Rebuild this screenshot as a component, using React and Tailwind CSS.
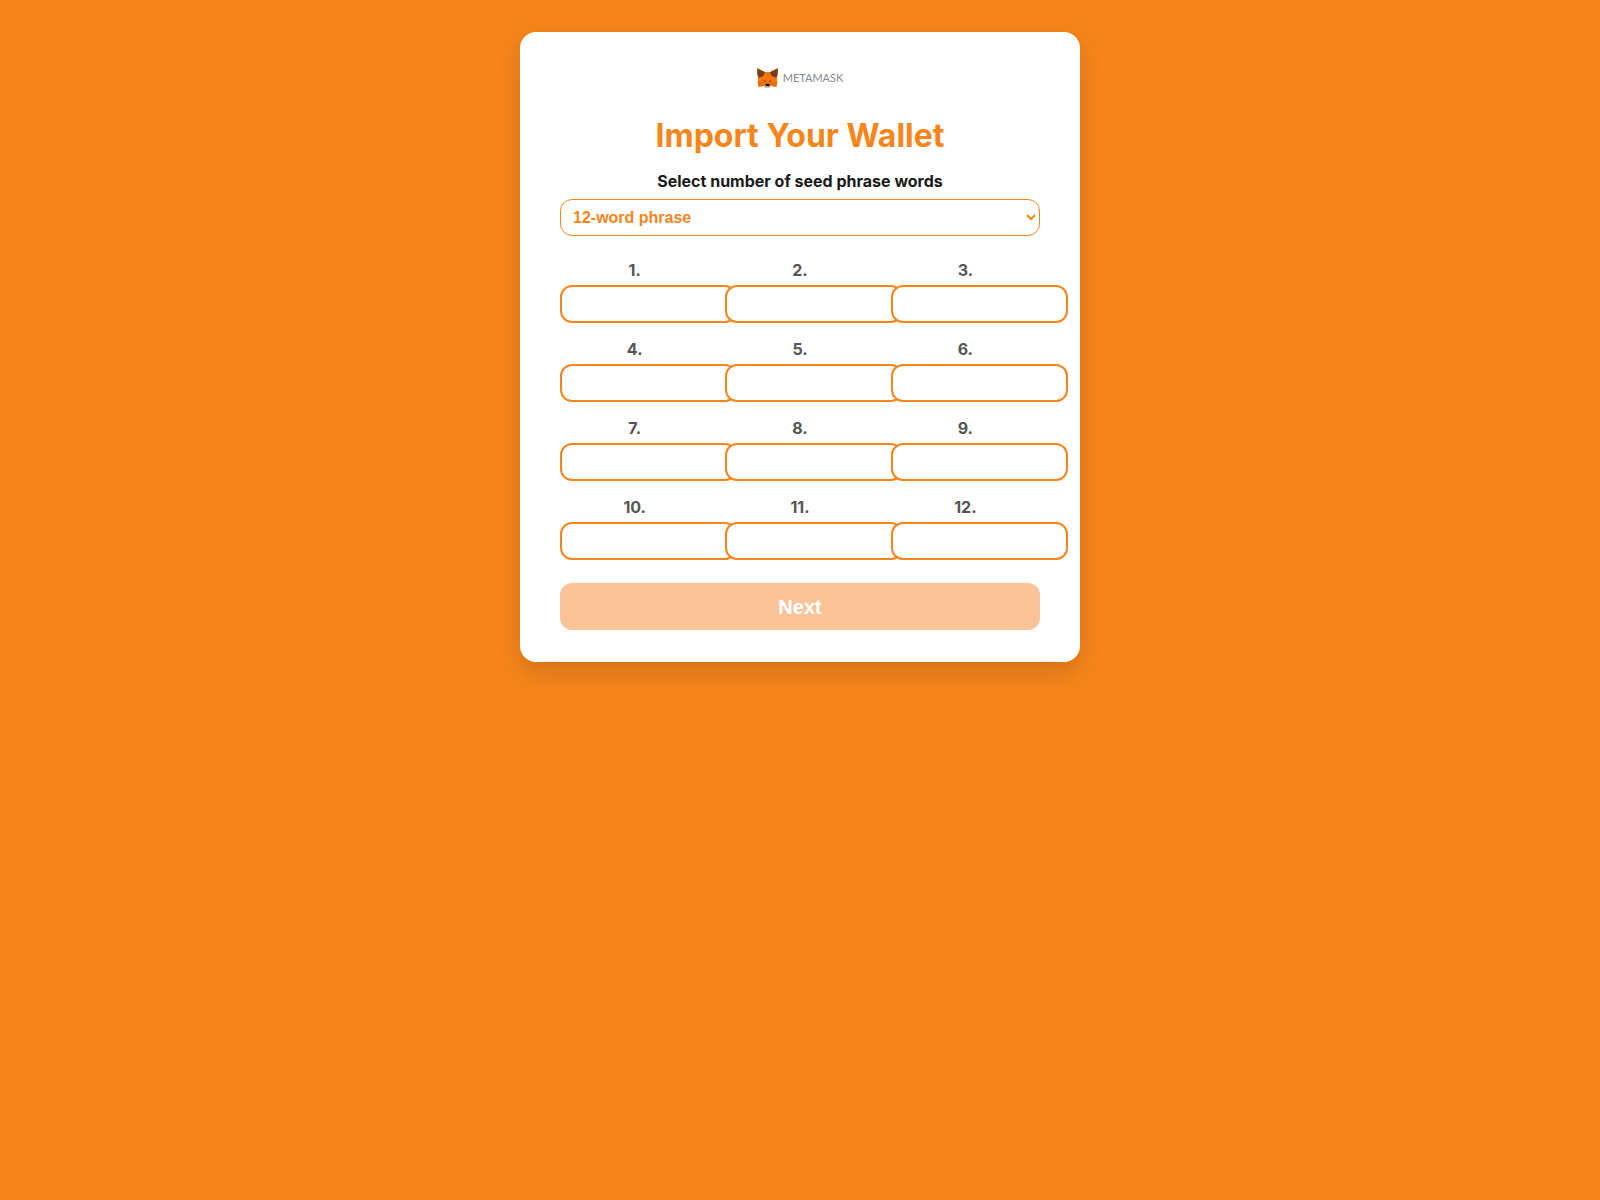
import React from 'react';

const WORD_NUMBERS = [1, 2, 3, 4, 5, 6, 7, 8, 9, 10, 11, 12];

function FoxMark() {
  return (
    <svg viewBox="0 0 63 60" className="h-5 w-[21px]" aria-hidden="true">
      <path d="M1 1 L24 12 H39 L62 1 L62 18 L59 33 L61 42 L58 56 L43 54 L36 59 H27 L20 54 L5 56 L2 42 L4 33 L1 18 Z" fill="#f5760b" />
      <path d="M1 1 L24 13 L19 24 L5 30 L1 18 Z" fill="#763e1a" />
      <path d="M62 1 L39 13 L44 24 L58 30 L62 18 Z" fill="#763e1a" />
      <path d="M2 42 L20 42 L21 53 L5 56 Z M61 42 L43 42 L42 53 L58 56 Z" fill="#ea6a0d" />
      <path d="M5 30 L20 26 L26 36 L20 41 L3 41 Z M58 30 L43 26 L37 36 L43 41 L60 41 Z" fill="#f6780f" />
      <path d="M18 36 L26 39 L25 43 Z M45 36 L37 39 L38 43 Z" fill="#3a3230" />
      <path d="M20 53 L27 50 H36 L43 53 L37 60 H26 Z" fill="#d7c1b3" />
      <path d="M26 47 H37 L38 55 H25 Z" fill="#161616" />
    </svg>
  );
}

function Logo() {
  return (
    <div className="flex h-7 items-center justify-center gap-[5px]">
      <FoxMark />
      <span className="font-['Lato',sans-serif] text-[11px] leading-5 text-[#85898c]">METAMASK</span>
    </div>
  );
}

function WordField({ number }) {
  const id = `word-${number}`;
  return (
    <div className="flex flex-col gap-[5px]">
      <label htmlFor={id} className="text-center text-base leading-5 font-bold text-[#555]">
        {number}.
      </label>
      <input
        id={id}
        type="text"
        autoComplete="off"
        className="h-[38px] w-[calc(100%+28px)] rounded-xl border-2 border-[#f6851b] bg-white px-3 text-base outline-none"
      />
    </div>
  );
}

export default function App() {
  return (
    <div className="min-h-screen bg-[#f6851b] py-8 font-['Inter',sans-serif]">
      <main className="mx-auto flex w-full max-w-[560px] flex-col rounded-2xl bg-white px-10 py-8 shadow-[0_10px_25px_rgba(0,0,0,0.15)]">
        <Logo />
        <h1 className="mt-6 text-center text-[32px] leading-10 font-bold text-[#f6851b]">Import Your Wallet</h1>
        <label htmlFor="word-count" className="mt-[15px] text-center text-base leading-5 font-bold text-[#1a1a1a]">
          Select number of seed phrase words
        </label>
        <select
          id="word-count"
          className="mt-2 h-[37px] w-full rounded-xl border border-[#f6851b] bg-white px-2 font-['Liberation_Sans',sans-serif] text-base font-semibold text-[#f6851b]"
        >
          <option>12-word phrase</option>
          <option>24-word phrase</option>
        </select>
        <div className="mt-6 grid grid-cols-3 gap-4">
          {WORD_NUMBERS.map((n) => (
            <WordField key={n} number={n} />
          ))}
        </div>
        <button
          type="button"
          disabled
          className="mt-[23px] h-[47px] w-full rounded-xl bg-[#fbc398] font-['Liberation_Sans',sans-serif] text-xl font-bold text-white"
        >
          Next
        </button>
      </main>
    </div>
  );
}
